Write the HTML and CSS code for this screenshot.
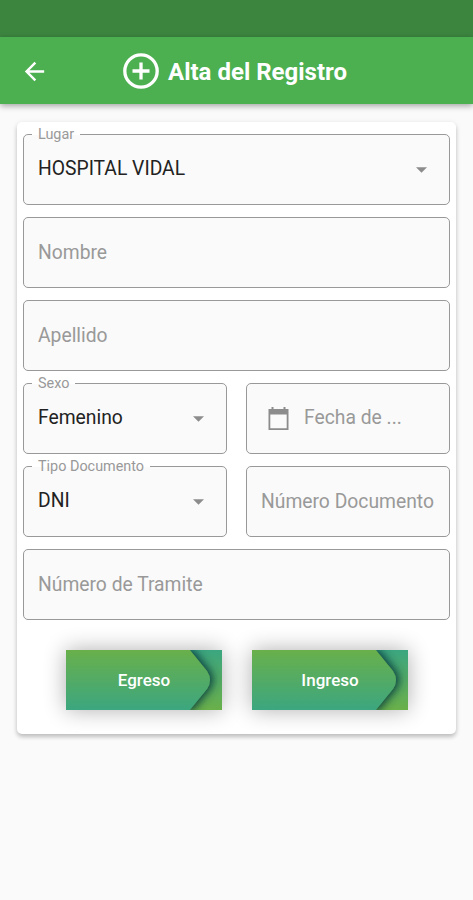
FILE: index.html
```html
<!DOCTYPE html>
<html lang="es">
<head>
    <meta charset="UTF-8">
    <meta name="viewport" content="width=device-width, initial-scale=1.0">
    <title>Alta del Registro</title>
    <link rel="stylesheet" href="styles.css">
</head>
<body>

    <div class="estado"></div>

    <header class="barra">
        <svg class="volver" viewBox="0 0 24 24"><path d="M20 11H7.83l5.59-5.59L12 4l-8 8 8 8 1.41-1.41L7.83 13H20v-2z"/></svg>
        <svg class="mas" viewBox="0 0 36 36"><circle cx="18" cy="18" r="16.2"/><path d="M18 9.5v17M9.5 18h17"/></svg>
        <h1>Alta del Registro</h1>
    </header>

    <form class="tarjeta">
        <div class="campo">
            <label>Lugar</label>
            <span class="valor">HOSPITAL VIDAL</span>
            <svg class="flecha" viewBox="0 0 12 6"><path d="M0 0h12L6 6z"/></svg>
        </div>
        <div class="campo"><span>Nombre</span></div>
        <div class="campo"><span>Apellido</span></div>

        <div class="fila">
            <div class="campo">
                <label>Sexo</label>
                <span class="valor">Femenino</span>
                <svg class="flecha" viewBox="0 0 12 6"><path d="M0 0h12L6 6z"/></svg>
            </div>
            <div class="campo fecha">
                <svg class="calendario" viewBox="0 0 20 23"><path d="M0 2h3V0h2v2h10V0h2v2h3v21H0zM1.8 7.5v13.7h16.4V7.5z" fill-rule="evenodd"/></svg>
                <span>Fecha de ...</span>
            </div>
        </div>

        <div class="fila">
            <div class="campo">
                <label>Tipo Documento</label>
                <span class="valor">DNI</span>
                <svg class="flecha" viewBox="0 0 12 6"><path d="M0 0h12L6 6z"/></svg>
            </div>
            <div class="campo"><span>Número Documento</span></div>
        </div>

        <div class="campo"><span>Número de Tramite</span></div>

        <div class="botones">
            <button type="button">
                <svg class="punta" viewBox="0 0 156 60">
                    <defs>
                        <linearGradient id="verde" x1="0" y1="0" x2="0" y2="1">
                            <stop offset="0" stop-color="#6ab04a"/>
                            <stop offset="1" stop-color="#3ba680"/>
                        </linearGradient>
                        <filter id="sombra" x="-20%" y="-40%" width="140%" height="180%">
                            <feDropShadow dx="3" dy="0" stdDeviation="5" flood-color="#00303c" flood-opacity="0.95"/>
                        </filter>
                    </defs>
                    <path d="M-20-1H123L141 21Q147 30 141 39L123 61H-20z" fill="url(#verde)" filter="url(#sombra)"/>
                </svg>
                <span>Egreso</span>
            </button>
            <button type="button">
                <svg class="punta" viewBox="0 0 156 60">
                    <path d="M-20-1H123L141 21Q147 30 141 39L123 61H-20z" fill="url(#verde)" filter="url(#sombra)"/>
                </svg>
                <span>Ingreso</span>
            </button>
        </div>
    </form>

</body>
</html>
```
FILE: styles.css
```css
* {
    box-sizing: border-box;
}
body {
    margin: 0;
    min-height: 900px;
    background-color: #fafafa;
    font-family: Roboto, sans-serif;
    color: #222;
}
.estado {
    height: 37px;
    background-color: #3c853f;
}
.barra {
    display: flex;
    align-items: center;
    height: 67px;
    padding: 1px 0 0 20px;
    background-color: #4caf50;
    box-shadow: 0 2px 6px rgba(0, 0, 0, 0.35);
}
.volver {
    width: 29px;
    height: 29px;
    fill: white;
}
.mas {
    width: 36px;
    height: 36px;
    margin-left: 74px;
    margin-right: 9px;
    fill: none;
    stroke: white;
    stroke-width: 3.3;
}
h1 {
    margin: 0;
    padding-top: 2px;
    font-size: 24px;
    font-weight: bold;
    color: white;
    white-space: nowrap;
}
.tarjeta {
    display: flex;
    flex-direction: column;
    gap: 12px;
    width: 439px;
    height: 612px;
    margin: 18px 0 0 17px;
    padding: 12px 6px;
    background-color: white;
    border-radius: 5px;
    box-shadow: 0 3px 4px rgba(0, 0, 0, 0.2), 0 1px 6px rgba(0, 0, 0, 0.08);
}
.campo {
    position: relative;
    display: flex;
    align-items: center;
    height: 71px;
    padding: 0 22px 0 14px;
    border: 1.5px solid #999;
    border-radius: 5px;
    background-color: #fafafa;
    font-size: 19.3px;
    color: #999;
    white-space: nowrap;
}
.campo label {
    position: absolute;
    top: -8px;
    left: 8px;
    padding: 0 6px;
    background: linear-gradient(white 50%, #fafafa 50%);
    font-size: 14.4px;
    line-height: 16px;
}
.valor {
    padding-bottom: 2px;
    color: #222;
}
.flecha {
    width: 11px;
    height: 6px;
    margin-left: auto;
    fill: #8c8c8c;
}
.fila {
    display: grid;
    grid-template-columns: 204px 204px;
    column-gap: 19px;
}
.fecha {
    padding-left: 21px;
}
.fecha span {
    padding-bottom: 2px;
}
.calendario {
    width: 21px;
    height: 23px;
    margin-right: 15px;
    fill: #8c8c8c;
}
.botones {
    display: flex;
    gap: 30px;
    padding: 18px 0 0 43px;
}
button {
    position: relative;
    width: 156px;
    height: 60px;
    padding: 0;
    border: none;
    background: linear-gradient(#3ba680, #6ab04a);
    box-shadow: 0 0 22px rgba(0, 0, 0, 0.32);
    font-family: Roboto, sans-serif;
    font-size: 17px;
    font-weight: 500;
    color: white;
}
.punta {
    position: absolute;
    top: 0;
    left: 0;
    width: 156px;
    height: 60px;
    overflow: hidden;
}
button span {
    position: relative;
}
```
